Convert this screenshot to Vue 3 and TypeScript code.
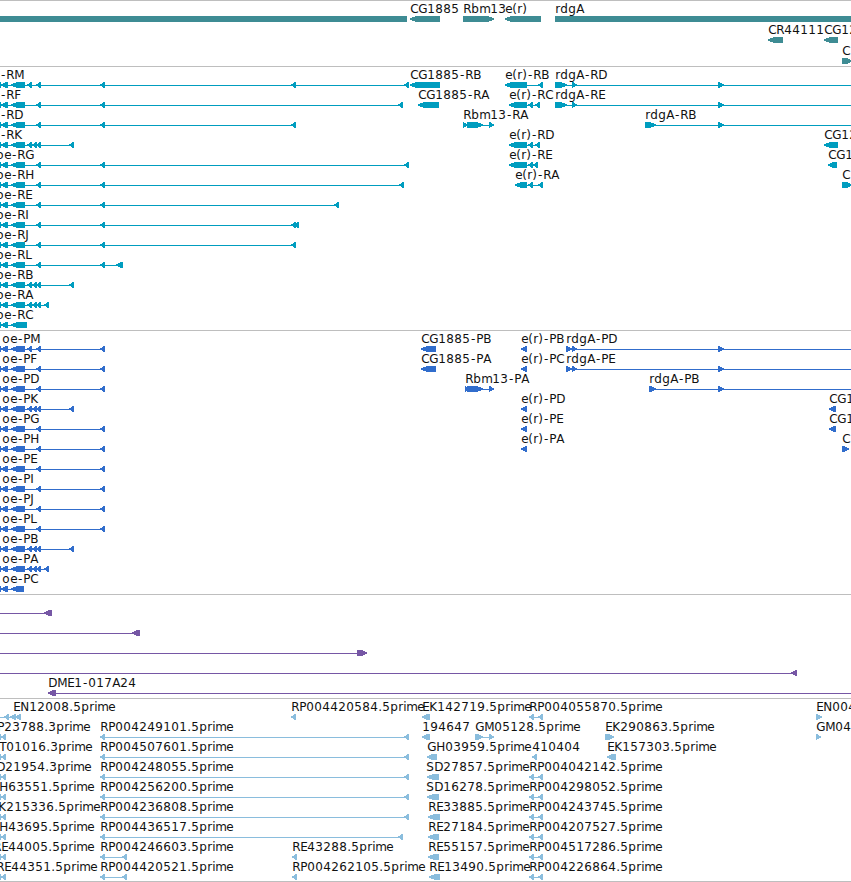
<script setup lang="ts">
type Strand = '+' | '-'
type Span = [number, number]

interface Feature {
  row: number
  label: string
  x: number
  strand: Strand
  exons: Span[]
  // the connecting line, when it runs past the outermost exons
  line?: Span
}

interface Track {
  name: string
  height: number
  rowHeight: number
  features: Feature[]
}

const WIDTH = 851

const f = (row: number, label: string, x: number, strand: Strand, exons: Span[], line?: Span): Feature => ({
  row,
  label,
  x,
  strand,
  exons,
  line,
})

const genes: Feature[] = [
  f(0, '', 0, '-', [[-10, 407]]),
  f(0, 'CG1885', 410, '-', [[410, 440]]),
  f(0, 'Rbm13', 463, '+', [[463, 494]]),
  f(0, 'e(r)', 505, '-', [[505, 541]]),
  f(0, 'rdgA', 555, '+', [[555, 870]]),
  f(1, 'CR44111', 768, '-', [[768, 783]]),
  f(1, 'CG12', 824, '-', [[824, 838]]),
  f(2, 'C', 842, '+', [[842, 852]]),
]

const stub: Span[] = [[-4, 1], [1, 8]]
const base: Span[] = [...stub, [11, 25]]
const far: Span[] = [...base, [36, 41], [100, 105]]
const near: Span[] = [...base, [27, 32], [32, 37], [36, 41]]

const leftTranscripts: [string, Span[]][] = [
  ['-RM', [...base, [27, 32], [36, 41], [100, 105], [291, 296], [404, 409]]],
  ['-RF', [...far, [398, 403]]],
  ['-RD', [...far, [291, 296]]],
  ['-RK', [...near, [69, 74]]],
  ['oe-RG', [...far, [404, 409]]],
  ['oe-RH', [...far, [399, 404]]],
  ['oe-RE', [...far, [334, 339]]],
  ['oe-RI', [...far, [291, 296], [294, 299]]],
  ['oe-RJ', [...far, [291, 296]]],
  ['oe-RL', [...far, [116, 123]]],
  ['oe-RB', [...near, [69, 74]]],
  ['oe-RA', [...near, [44, 49]]],
  ['oe-RC', [...stub, [11, 27]]],
]

const transcripts: Feature[] = [
  ...leftTranscripts.map(([label, exons], row) => f(row, label, row < 4 ? 0 : -4, '-', exons)),
  f(0, 'CG1885-RB', 410, '-', [[410, 440]]),
  f(0, 'e(r)-RB', 505, '-', [[505, 527], [538, 543]]),
  f(0, 'rdgA-RD', 555, '+', [[555, 567], [572, 577], [718, 724]], [555, WIDTH]),
  f(1, 'CG1885-RA', 418, '-', [[418, 439]]),
  f(1, 'e(r)-RC', 509, '-', [[509, 527], [528, 533], [535, 540]]),
  f(1, 'rdgA-RE', 555, '+', [[555, 567], [572, 577], [718, 724]], [555, WIDTH]),
  f(2, 'Rbm13-RA', 463, '+', [[463, 467], [467, 483], [489, 494]]),
  f(2, 'rdgA-RB', 645, '+', [[645, 656], [718, 724]], [645, WIDTH]),
  f(3, 'e(r)-RD', 509, '-', [[509, 527], [528, 533], [535, 540]]),
  f(3, 'CG12', 824, '-', [[824, 838]]),
  f(4, 'e(r)-RE', 509, '-', [[509, 527], [528, 533], [533, 538]]),
  f(4, 'CG1', 828, '-', [[828, 837]]),
  f(5, 'e(r)-RA', 515, '-', [[515, 527], [528, 533], [538, 543]]),
  f(5, 'C', 842, '+', [[842, 852]]),
]

const leftProteins: [string, Span[]][] = [
  ['oe-PM', [...base, [27, 32], [36, 41], [100, 105]]],
  ['oe-PF', far],
  ['oe-PD', far],
  ['oe-PK', [...near, [69, 74]]],
  ['oe-PG', far],
  ['oe-PH', far],
  ['oe-PE', far],
  ['oe-PI', far],
  ['oe-PJ', far],
  ['oe-PL', far],
  ['oe-PB', [...near, [69, 74]]],
  ['oe-PA', [...near, [44, 49]]],
  ['oe-PC', [...stub, [11, 24]]],
]

const proteins: Feature[] = [
  ...leftProteins.map(([label, exons], row) => f(row, label, 2, '-', exons)),
  f(0, 'CG1885-PB', 421, '-', [[421, 436]]),
  f(0, 'e(r)-PB', 521, '-', [[521, 527]]),
  f(0, 'rdgA-PD', 566, '+', [[566, 572], [572, 577], [718, 724]], [566, WIDTH]),
  f(1, 'CG1885-PA', 421, '-', [[421, 436]]),
  f(1, 'e(r)-PC', 521, '-', [[521, 527]]),
  f(1, 'rdgA-PE', 566, '+', [[566, 572], [572, 577], [718, 724]], [566, WIDTH]),
  f(2, 'Rbm13-PA', 465, '+', [[465, 468], [467, 483], [489, 494]]),
  f(2, 'rdgA-PB', 649, '+', [[649, 656], [718, 724]], [649, WIDTH]),
  f(3, 'e(r)-PD', 521, '-', [[521, 527]]),
  f(3, 'CG1', 829, '-', [[829, 836]]),
  f(4, 'e(r)-PE', 521, '-', [[521, 527]]),
  f(4, 'CG1', 829, '-', [[829, 836]]),
  f(5, 'e(r)-PA', 521, '-', [[521, 527]]),
  f(5, 'C', 842, '+', [[842, 849]]),
]

const clones: Feature[] = [
  f(0, '', 0, '-', [[44, 52]], [0, 52]),
  f(1, '', 0, '-', [[132, 140]], [0, 140]),
  f(2, '', 0, '+', [[357, 367]], [0, 367]),
  f(3, '', 0, '-', [[791, 797]], [0, 797]),
  f(4, 'DME1-017A24', 48, '-', [[48, 56]], [48, WIDTH]),
]

const estLeft: [string, number][] = [
  ['P23788.3prime', -3],
  ['T01016.3prime', -1],
  ['D21954.3prime', -4],
  ['H63551.5prime', -1],
  ['K215336.5prime', -2],
  ['H43695.5prime', -1],
  ['RE44005.5prime', -7],
  ['RE44351.5prime', -4],
]

const estMiddle: [string, Span][] = [
  ['RP004249101.5prime', [404, 409]],
  ['RP004507601.5prime', [404, 409]],
  ['RP004248055.5prime', [404, 409]],
  ['RP004256200.5prime', [404, 409]],
  ['RP004236808.5prime', [404, 409]],
  ['RP004436517.5prime', [398, 403]],
  ['RP004246603.5prime', [122, 127]],
  ['RP004420521.5prime', [122, 127]],
]

const estRight: [number, string][] = [
  [0, 'RP004055870.5prime'],
  [3, 'RP004042142.5prime'],
  [4, 'RP004298052.5prime'],
  [5, 'RP004243745.5prime'],
  [6, 'RP004207527.5prime'],
  [7, 'RP004517286.5prime'],
  [8, 'RP004226864.5prime'],
]

const ests: Feature[] = [
  f(0, 'EN12008.5prime', 13, '-', [[4, 9], [10, 16], [15, 21]], [0, 21]),
  ...estLeft.map(([label, x], i) => f(i + 1, label, x, '-', [[-4, 1], [1, 6]])),
  ...estMiddle.map(([label, last], i) => f(i + 1, label, 100, '-', [[100, 105], last])),
  ...estRight.map(([row, label]) => f(row, label, 529, '-', [[529, 534], [538, 543]])),
  f(0, 'RP004420584.5prime', 291, '-', [[291, 296]]),
  f(0, 'EK142719.5prime', 422, '-', [[422, 430]]),
  f(0, 'EN004', 816, '+', [[816, 822]]),
  f(1, '194647', 422, '-', [[422, 430]]),
  f(1, 'GM05128.5prime', 475, '+', [[475, 483], [489, 494]]),
  f(1, 'EK290863.5prime', 605, '+', [[605, 614]]),
  f(1, 'GM04', 816, '+', [[816, 821]]),
  f(2, 'GH03959.5prime', 427, '-', [[427, 437]]),
  f(2, '410404', 532, '-', [[532, 537]]),
  f(2, 'EK157303.5prime', 607, '-', [[607, 616]]),
  f(3, 'SD27857.5prime', 426, '-', [[427, 439]]),
  f(4, 'SD16278.5prime', 426, '-', [[427, 439]]),
  f(5, 'RE33885.5prime', 428, '-', [[428, 440]]),
  f(6, 'RE27184.5prime', 428, '-', [[428, 439]]),
  f(7, 'RE43288.5prime', 292, '-', [[292, 297]]),
  f(7, 'RE55157.5prime', 428, '-', [[428, 439]]),
  f(8, 'RP004262105.5prime', 292, '-', [[292, 297]]),
  f(8, 'RE13490.5prime', 429, '-', [[429, 440]]),
]

const tracks: Track[] = [
  { name: 'genes', height: 65, rowHeight: 21, features: genes },
  { name: 'transcripts', height: 263, rowHeight: 20, features: transcripts },
  { name: 'proteins', height: 263, rowHeight: 20, features: proteins },
  { name: 'clones', height: 103, rowHeight: 20, features: clones },
  { name: 'ests', height: 182, rowHeight: 20, features: ests },
]

const advances: Record<string, number> = {
  '.': 4, '(': 5, ')': 5, '-': 6, r: 5, i: 3, m: 11, e: 7,
  G: 9, H: 9, N: 9, D: 9, M: 10, E: 7, P: 7, T: 7, F: 7, L: 7, I: 4, J: 4,
}

const glyphXs = (label: string, start: number) => {
  let x = start + 0.3
  return [...label]
    .map((ch) => {
      const at = ch === '-' ? x + 0.8 : x
      x += advances[ch] ?? 8
      return at
    })
    .join(' ')
}

const barTop = (track: Track, row: number) => 15 + row * track.rowHeight

const exonPoints = ([start, end]: Span, strand: Strand, y: number) => {
  const width = end - start
  const head = width > 10 ? 6 : Math.min(5, width - 0.6)
  const tip = strand === '-' ? start : end
  const neck = strand === '-' ? start + head : end - head
  const tail = strand === '-' ? end : start
  return [
    [tip, y + 2.4],
    [neck, y],
    [tail, y],
    [tail, y + 6],
    [neck, y + 6],
    [tip, y + 3.6],
  ].join(' ')
}

const lineSpan = (feature: Feature): Span =>
  feature.line ?? [feature.exons[0][0], feature.exons[feature.exons.length - 1][1] - 1]
</script>

<template>
  <main class="browser">
    <section v-for="track in tracks" :key="track.name" class="track" :class="track.name">
      <svg :width="WIDTH" :height="track.height">
        <g v-for="(feature, i) in track.features" :key="i">
          <rect
            class="shape"
            :x="lineSpan(feature)[0]"
            :y="barTop(track, feature.row) + 3"
            :width="lineSpan(feature)[1] - lineSpan(feature)[0]"
            height="1"
          />
          <polygon
            v-for="(exon, n) in feature.exons"
            :key="n"
            class="shape"
            :points="exonPoints(exon, feature.strand, barTop(track, feature.row))"
          />
          <text v-if="feature.label" :x="glyphXs(feature.label, feature.x)" :y="barTop(track, feature.row) - 3">{{ feature.label }}</text>
        </g>
      </svg>
    </section>
  </main>
</template>

<style>
body {
  background: #fff;
}
</style>

<style scoped>
.browser {
  width: 851px;
  border-bottom: 1px solid #bebebe;
  overflow: hidden;
}

.track {
  border-top: 1px solid #bebebe;
}

.track svg {
  display: block;
}

.shape {
  fill: currentColor;
  shape-rendering: crispEdges;
}

text {
  font-family: 'DejaVu Sans', sans-serif;
  font-size: 12px;
  fill: #111;
}

.genes {
  color: #3e8c94;
}

.transcripts {
  color: #009dbf;
}

.proteins {
  color: #316dcc;
}

.clones {
  color: #7657a5;
}

.ests {
  color: #8abddd;
}
</style>
